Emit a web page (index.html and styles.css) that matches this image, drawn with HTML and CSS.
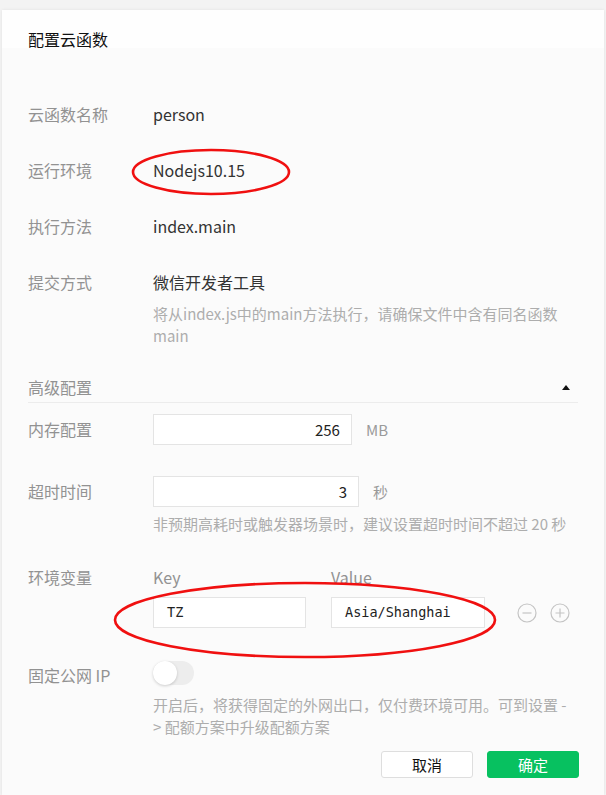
FILE: index.html
```html
<!DOCTYPE html>
<html lang="zh-CN">
<head>
<meta charset="utf-8">
<title>配置云函数</title>
<link rel="stylesheet" href="styles.css">
</head>
<body>
<div class="modal">
  <div class="header"><span class="title">配置云函数</span></div>
  <div class="content">
    <div class="field field-first">
      <div class="label">云函数名称</div>
      <div class="value">person</div>
    </div>
    <div class="field">
      <div class="label">运行环境</div>
      <div class="value">Nodejs10.15</div>
    </div>
    <div class="field">
      <div class="label">执行方法</div>
      <div class="value">index.main</div>
    </div>
    <div class="field field-last">
      <div class="label">提交方式</div>
      <div class="value">
        <div>微信开发者工具</div>
        <div class="hint hint-submit">将从index.js中的main方法执行，请确保文件中含有同名函数<br>main</div>
      </div>
    </div>

    <div class="section-head">
      <span class="section-title">高级配置</span>
      <span class="caret"></span>
    </div>

    <div class="field field-input field-mem">
      <div class="label">内存配置</div>
      <div class="value">
        <div class="unit-row">
          <div class="num-input">256</div>
          <span class="unit">MB</span>
        </div>
      </div>
    </div>

    <div class="field field-input field-timeout">
      <div class="label">超时时间</div>
      <div class="value">
        <div class="unit-row">
          <div class="num-input">3</div>
          <span class="unit">秒</span>
        </div>
        <div class="hint hint-timeout">非预期高耗时或触发器场景时，建议设置超时时间不超过 20 秒</div>
      </div>
    </div>

    <div class="field field-env">
      <div class="label">环境变量</div>
      <div class="value">
        <div class="kv-head">
          <span class="kv-key">Key</span>
          <span class="kv-val">Value</span>
        </div>
        <div class="kv-row">
          <div class="text-input kv-key-input">TZ</div>
          <div class="text-input kv-val-input">Asia/Shanghai</div>
          <div class="kv-actions">
            <svg class="circle-icon" width="20" height="20" viewBox="0 0 20 20"><circle cx="10" cy="10" r="9" fill="none" stroke="#c4c4c4" stroke-width="1.2"/><path d="M5.5 10h9" stroke="#c4c4c4" stroke-width="1.2"/></svg>
            <svg class="circle-icon" width="20" height="20" viewBox="0 0 20 20"><circle cx="10" cy="10" r="9" fill="none" stroke="#c4c4c4" stroke-width="1.2"/><path d="M5.5 10h9M10 5.5v9" stroke="#c4c4c4" stroke-width="1.2"/></svg>
          </div>
        </div>
      </div>
    </div>

    <div class="field field-ip">
      <div class="label">固定公网 IP</div>
      <div class="value">
        <div class="switch"><span class="knob"></span></div>
        <div class="hint hint-ip">开启后，将获得固定的外网出口，仅付费环境可用。可到设置 -<br>&gt; 配额方案中升级配额方案</div>
      </div>
    </div>

    <div class="footer">
      <button class="btn btn-cancel">取消</button>
      <button class="btn btn-ok">确定</button>
    </div>
  </div>
</div>

<svg class="annotations" width="606" height="795" viewBox="0 0 606 795">
  <ellipse cx="211" cy="172" rx="78" ry="22" fill="none" stroke="#f01010" stroke-width="2.6"/>
  <ellipse cx="305" cy="620" rx="190" ry="37" fill="none" stroke="#f01010" stroke-width="2.6"/>
</svg>
</body>
</html>
```

FILE: styles.css
```css
* { box-sizing: border-box; }

html, body {
  margin: 0;
  padding: 0;
}

body {
  background: #f3f3f3;
  font-family: "Noto Sans CJK SC", "Noto Sans", sans-serif;
  color: #333;
  width: 606px;
  height: 795px;
  overflow: hidden;
  position: relative;
}

.modal {
  margin: 10px 2px 0 2px;
  height: 785px;
  background: #fbfbfb;
  box-shadow: 0 0 3px rgba(0, 0, 0, 0.08);
}

.header {
  height: 38px;
  background: #fefefe;
  padding: 17px 0 0 26px;
}

.title {
  font-size: 16px;
  line-height: 24px;
  color: #111;
}

.content {
  padding: 0 26px 0 26px;
}

.field {
  display: flex;
  align-items: flex-start;
  margin-top: 32px;
}

.field-first { margin-top: 54px; }

.label {
  width: 125px;
  flex: none;
  font-size: 16px;
  line-height: 24px;
  color: #929292;
}

.value {
  flex: 1;
  font-size: 16px;
  line-height: 24px;
  color: #333;
  min-width: 0;
}

.hint {
  font-size: 15px;
  line-height: 22px;
  color: #adadad;
  width: 420px;
}

.hint-submit { margin-top: 9px; }

.section-head {
  margin-top: 28px;
  display: flex;
  justify-content: space-between;
  align-items: center;
  line-height: 24px;
  padding-bottom: 3px;
  border-bottom: 1px solid #ececec;
}

.section-title {
  font-size: 16px;
  color: #929292;
}

.caret {
  width: 0;
  height: 0;
  border-left: 4px solid transparent;
  border-right: 4px solid transparent;
  border-bottom: 5px solid #111;
  margin-right: 8px;
}

.field-input .label { line-height: 31px; }

.field-mem { margin-top: 11px; }
.field-timeout { margin-top: 31px; }

.unit-row {
  display: flex;
  align-items: center;
  width: 235px;
  gap: 14px;
}

.num-input {
  flex: 1;
  height: 31px;
  background: #fff;
  border: 1px solid #e4e4e4;
  text-align: right;
  padding-right: 11px;
  font-size: 15px;
  line-height: 29px;
  color: #222;
}

.unit {
  font-size: 15px;
  color: #9a9a9a;
}

.hint-timeout { margin-top: 6px; }

.field-env { margin-top: 30px; }

.kv-head {
  display: flex;
  color: #929292;
}

.kv-key { width: 178px; }

.kv-row {
  margin-top: 8px;
  display: flex;
  align-items: center;
}

.text-input {
  height: 31px;
  background: #fff;
  border: 1px solid #e4e4e4;
  font-family: "DejaVu Sans Mono", "Liberation Mono", monospace;
  font-size: 13.5px;
  line-height: 29px;
  color: #222;
  padding-left: 13px;
}

.kv-key-input { width: 153px; margin-right: 25px; }
.kv-val-input { width: 154px; }

.kv-actions {
  display: flex;
  gap: 13px;
  margin-left: 32px;
}

.circle-icon { display: block; }

.field-ip { margin-top: 35px; }

.switch {
  margin-top: -2px;
  width: 41px;
  height: 24px;
  border-radius: 12px;
  background: #ededed;
  position: relative;
}

.knob {
  position: absolute;
  left: 0;
  top: 0;
  width: 24px;
  height: 24px;
  border-radius: 50%;
  background: #fff;
  box-shadow: 0 1px 3px rgba(0, 0, 0, 0.18);
}

.hint-ip { margin-top: 9px; }

.footer {
  margin-top: 13px;
  margin-right: -1px;
  display: flex;
  justify-content: flex-end;
  gap: 14px;
}

.btn {
  width: 92px;
  height: 27px;
  border-radius: 3px;
  font-family: "Noto Sans CJK SC", sans-serif;
  font-size: 15px;
  padding: 0;
  cursor: pointer;
}

.btn-cancel {
  background: #fff;
  border: 1px solid #dedede;
  color: #111;
}

.btn-ok {
  background: #07c160;
  border: 1px solid #07c160;
  color: #fff;
}

.annotations {
  position: absolute;
  left: 0;
  top: 0;
  pointer-events: none;
}
```
